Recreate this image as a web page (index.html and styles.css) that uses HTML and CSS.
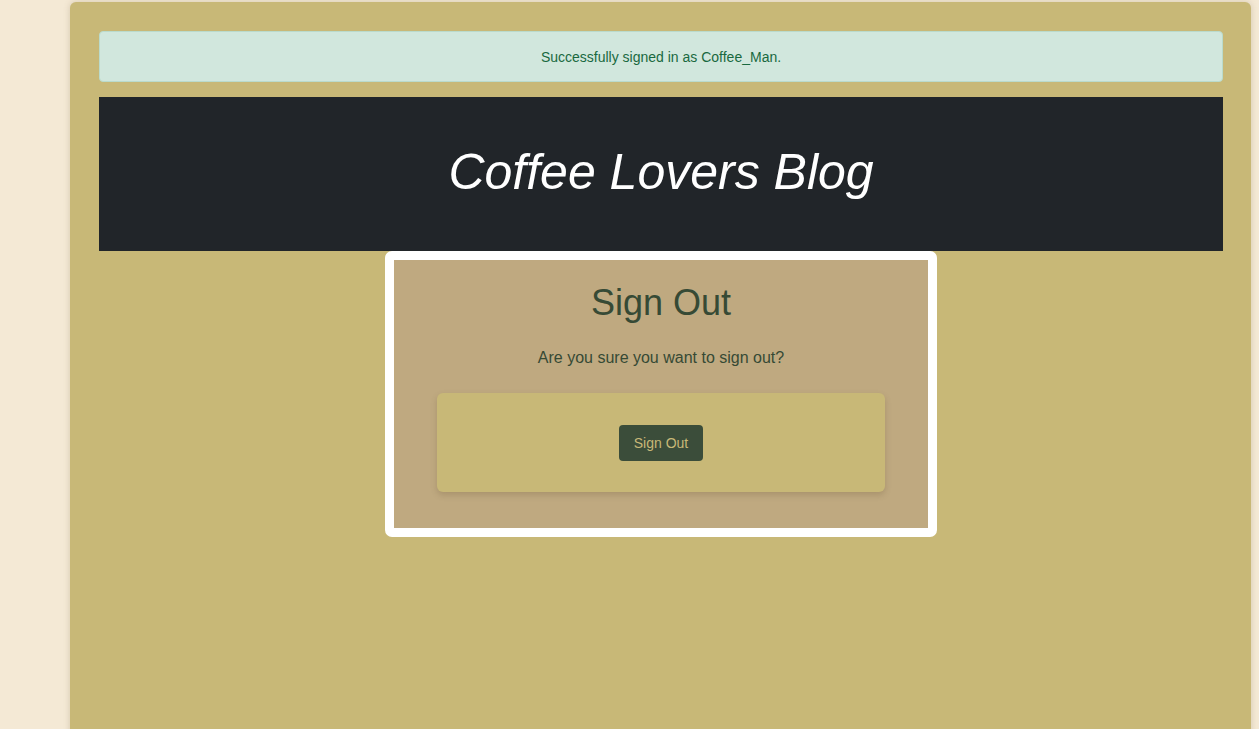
FILE: index.html
```html
<!DOCTYPE html>
<html lang="en">
<head>
<meta charset="utf-8">
<title>Coffee Lovers Blog</title>
<link rel="stylesheet" href="styles.css">
</head>
<body>
<main class="page">
  <div class="alert">Successfully signed in as Coffee_Man.</div>
  <header class="hero">
    <h1 class="hero-title">Coffee Lovers Blog</h1>
  </header>
  <section class="signout">
    <h2 class="signout-title">Sign Out</h2>
    <p class="signout-text">Are you sure you want to sign out?</p>
    <div class="signout-box">
      <button class="btn" type="button">Sign Out</button>
    </div>
  </section>
</main>
</body>
</html>
```
FILE: styles.css
```css
* { box-sizing: border-box; }
html, body { height: 100%; }
body {
  margin: 0;
  background: #f4e9d5;
  font-family: "Liberation Sans", Arial, sans-serif;
  overflow: hidden;
}
.page {
  margin: 2px 0 0 70px;
  width: 1181px;
  min-height: 760px;
  padding: 29px 28px 0 29px;
  background: #c8b877;
  border-radius: 6px;
  box-shadow: 0 0 6px rgba(120, 100, 60, 0.25);
}
.alert {
  height: 51px;
  display: flex;
  align-items: center;
  justify-content: center;
  background: #d1e7dd;
  border: 1px solid #badbcc;
  border-radius: 4px;
  color: #19693f;
  font-size: 14px;
  margin-bottom: 15px;
}
.hero {
  height: 154px;
  background: #212529;
  display: flex;
  align-items: center;
  justify-content: center;
}
.hero-title {
  margin: 0;
  color: #fff;
  font-size: 50px;
  font-style: italic;
  font-weight: 400;
  line-height: 1.2;
  padding-bottom: 4px;
}
.signout {
  width: 552px;
  margin: 0 auto;
  border: 9px solid #fff;
  border-radius: 7px;
  background: #bfa980;
  padding: 21px 43px 36px;
  text-align: center;
}
.signout-title {
  margin: 0;
  color: #364a35;
  font-size: 36px;
  font-weight: 400;
  line-height: 1.2;
}
.signout-text {
  margin: 22px 0 23px;
  color: #364a35;
  font-size: 16px;
  line-height: 24px;
}
.signout-box {
  height: 99px;
  background: #c8b877;
  border-radius: 6px;
  box-shadow: 0 3px 6px rgba(90, 70, 40, 0.22);
  display: flex;
  align-items: center;
  justify-content: center;
}
.btn {
  width: 84px;
  height: 36px;
  border: 0;
  border-radius: 4px;
  background: #3b4d3a;
  color: #c8b877;
  font-family: "Liberation Sans", Arial, sans-serif;
  font-size: 14px;
  padding: 0;
  cursor: pointer;
}
```
